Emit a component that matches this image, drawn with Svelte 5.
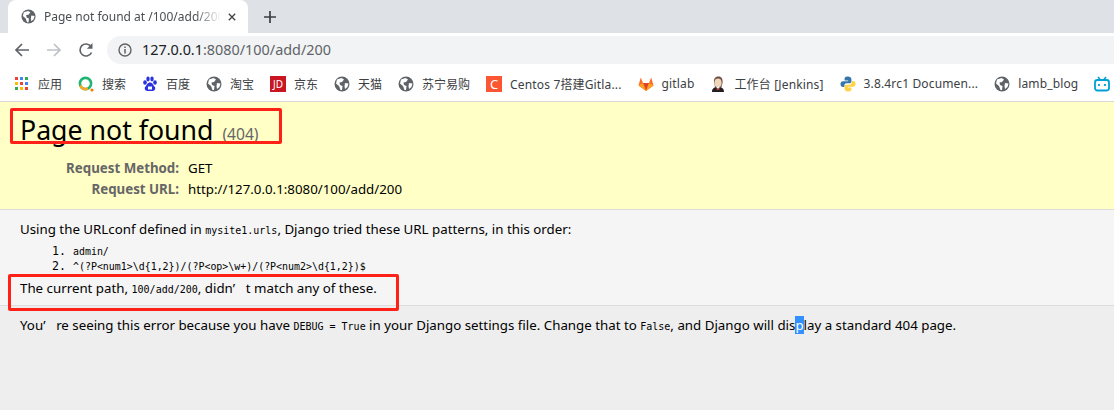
<script>
  const bookmarks = [
    { icon: 'apps', label: '应用' },
    { icon: 'sou', label: '搜索' },
    { icon: 'baidu', label: '百度' },
    { icon: 'globe', label: '淘宝' },
    { icon: 'jd', label: '京东' },
    { icon: 'globe', label: '天猫' },
    { icon: 'globe', label: '苏宁易购' },
    { icon: 'csdn', label: 'Centos 7搭建Gitla...', wide: true },
    { icon: 'gitlab', label: 'gitlab', wide: true },
    { icon: 'jenkins', label: '工作台 [Jenkins]', wide: true },
    { icon: 'python', label: '3.8.4rc1 Documen...', wide: true },
    { icon: 'globe', label: 'lamb_blog', wide: true },
    { icon: 'bili', label: '' }
  ];
  const appColors = ['#ea4335', '#4285f4', '#34a853', '#fbbc05', '#ea4335', '#4285f4', '#34a853', '#fbbc05', '#ea4335'];
</script>

{#snippet globe()}
  <svg class="ico" viewBox="0 0 16 16">
    <circle cx="8" cy="8" r="7.5" fill="#5f6368" />
    <path d="M3 3.5 L7.5 2 L10 3.5 L8 6 L5.5 6.5 L6 9 L8.5 10 L8 14 L6.5 14 L5 10 L2 7.5 Z M11 7 L14.5 7.5 L13.5 11 L11 13 L10.5 10 Z" fill="#fff" />
  </svg>
{/snippet}

<div class="browser">
  <div class="tabstrip">
    <div class="tab">
      {@render globe()}
      <span class="tab-title">Page not found at /100/add/200</span>
      <svg class="close" viewBox="0 0 10 10"><path d="M1 1 L9 9 M9 1 L1 9" stroke="#3c4043" stroke-width="1.6" /></svg>
    </div>
    <svg class="newtab" viewBox="0 0 12 12"><path d="M6 0 V12 M0 6 H12" stroke="#3c4043" stroke-width="1.7" /></svg>
  </div>

  <div class="toolbar">
    <svg class="nav" viewBox="0 0 16 16"><path d="M15 8 H2 M8 2 L2 8 L8 14" fill="none" stroke="#5f6368" stroke-width="1.7" /></svg>
    <svg class="nav" viewBox="0 0 16 16"><path d="M1 8 H14 M8 2 L14 8 L8 14" fill="none" stroke="#bdc1c6" stroke-width="1.7" /></svg>
    <svg class="nav" viewBox="0 0 16 16"><path d="M13.5 10.5 A6 6 0 1 1 13 4.6" fill="none" stroke="#5f6368" stroke-width="1.7" /><path d="M14.5 1 V6.8 H8.8 Z" fill="#5f6368" /></svg>
    <div class="omnibox">
      <svg class="info" viewBox="0 0 14 14"><circle cx="7" cy="7" r="6" fill="none" stroke="#5f6368" stroke-width="1.4" /><path d="M7 6 V10.5 M7 3.4 V5" stroke="#5f6368" stroke-width="1.5" /></svg>
      <span class="url"><b>127.0.0.1</b>:8080/100/add/200</span>
    </div>
  </div>

  <div class="bookmarks">
    {#each bookmarks as b}
      <div class="bm">
        {#if b.icon === 'apps'}
          <div class="apps">
            {#each appColors as c}<i style="background: {c}"></i>{/each}
          </div>
        {:else if b.icon === 'sou'}
          <svg class="ico" viewBox="0 0 16 16"><circle cx="7.5" cy="7.5" r="5.6" fill="none" stroke="#21b573" stroke-width="2.6" /><path d="M2.2 9.5 A5.6 5.6 0 0 0 10 12.5" fill="none" stroke="#f9a825" stroke-width="2.6" /><circle cx="14" cy="14" r="1.6" fill="#f57c00" /></svg>
        {:else if b.icon === 'baidu'}
          <svg class="ico" viewBox="0 0 16 16" fill="#2932e1"><ellipse cx="3" cy="6.5" rx="1.8" ry="2.3" /><ellipse cx="6" cy="3" rx="1.7" ry="2.4" /><ellipse cx="10" cy="3" rx="1.7" ry="2.4" /><ellipse cx="13" cy="6.5" rx="1.8" ry="2.3" /><path d="M8 6.5 C5.5 6.5 5 9 3.5 10.5 C2 12 2.8 15 5.5 15 H10.5 C13.2 15 14 12 12.5 10.5 C11 9 10.5 6.5 8 6.5 Z" /><rect x="6" y="10.5" width="4" height="3" fill="#fff" /></svg>
        {:else if b.icon === 'globe'}
          {@render globe()}
        {:else if b.icon === 'jd'}
          <span class="jd">JD</span>
        {:else if b.icon === 'csdn'}
          <span class="csdn">C</span>
        {:else if b.icon === 'gitlab'}
          <svg class="ico" viewBox="0 0 16 16"><path d="M8 15 L0.5 9.5 L2.8 1.5 L5 7 H11 L13.2 1.5 L15.5 9.5 Z" fill="#fc6d26" /><path d="M8 15 L5 7 H11 Z" fill="#e24329" /><path d="M0.5 9.5 L5 7 L8 15 Z M15.5 9.5 L11 7 L8 15 Z" fill="#fca326" /></svg>
        {:else if b.icon === 'jenkins'}
          <svg class="ico" viewBox="0 0 16 16"><path d="M4 6 C3.5 2 6 .5 8.5 .5 C11.5 .5 13 3 12.5 7 L11.5 11 H5 Z" fill="#6d4c41" /><ellipse cx="8" cy="7" rx="3.6" ry="4.4" fill="#f0d6b9" /><path d="M2 16 C2 12.5 4 11.5 6 11 L8 13 L10 11 C12 11.5 14 12.5 14 16 Z" fill="#231f20" /><path d="M6.5 12 L8 13.5 L9.5 12 V14 H6.5 Z" fill="#d33833" /></svg>
        {:else if b.icon === 'python'}
          <svg class="ico" viewBox="0 0 16 16"><path d="M8 .5 C5 .5 4.6 1.7 4.6 3 V4.6 H8.2 V5.2 H3 C1.4 5.2 .5 6.4 .5 8 C.5 9.8 1.4 11 3 11 H4.4 V9.2 C4.4 8 5.4 7.2 6.5 7.2 H9.8 C10.8 7.2 11.4 6.4 11.4 5.5 V3 C11.4 1.4 10 .5 8 .5 Z" fill="#3776ab" /><path d="M8 15.5 C11 15.5 11.4 14.3 11.4 13 V11.4 H7.8 V10.8 H13 C14.6 10.8 15.5 9.6 15.5 8 C15.5 6.2 14.6 5 13 5 H11.6 V6.8 C11.6 8 10.6 8.8 9.5 8.8 H6.2 C5.2 8.8 4.6 9.6 4.6 10.5 V13 C4.6 14.6 6 15.5 8 15.5 Z" fill="#ffd343" /></svg>
        {:else if b.icon === 'bili'}
          <svg class="ico" viewBox="0 0 16 16"><rect x="1" y="4" width="14" height="10.5" rx="2.4" fill="none" stroke="#00a1d6" stroke-width="1.8" /><path d="M4 1 L6.5 4 M12 1 L9.5 4" stroke="#00a1d6" stroke-width="1.6" /><path d="M5 8 V10 M11 8 V10" stroke="#00a1d6" stroke-width="1.8" /></svg>
        {/if}
        {#if b.label}<span class="bm-label" class:wide={b.wide}>{b.label}</span>{/if}
      </div>
    {/each}
  </div>
</div>

<main class="page">
  <section class="summary">
    <h1>Page not found <span>(404)</span></h1>
    <table>
      <tbody>
        <tr><th>Request Method:</th><td>GET</td></tr>
        <tr><th>Request URL:</th><td>http://127.0.0.1:8080/100/add/200</td></tr>
      </tbody>
    </table>
  </section>

  <section class="info-block">
    <p>Using the URLconf defined in <code>mysite1.urls</code>, Django tried these URL patterns, in this order:</p>
    <ol>
      <li><code>admin/</code></li>
      <li><code>^(?P&lt;num1&gt;\d{'{'}1,2{'}'})/(?P&lt;op&gt;\w+)/(?P&lt;num2&gt;\d{'{'}1,2{'}'})$</code></li>
    </ol>
    <p>The current path, <code>100/add/200</code>, didn<span class="quote">’</span>t match any of these.</p>
  </section>

  <section class="explanation">
    <p>You<span class="quote">’</span>re seeing this error because you have <code>DEBUG = True</code> in your Django settings file. Change that to <code>False</code>, and Django will dis<span class="sel">p</span>lay a standard 404 page.</p>
  </section>

  <div class="mark mark-title"></div>
  <div class="mark mark-path"></div>
</main>

<style>
  :global(body) {
    margin: 0;
    background: #eeeeee;
    font-family: "Noto Sans", "Noto Sans CJK SC", sans-serif;
    overflow: hidden;
  }

  .browser {
    height: 102px;
    background: #fff;
    border-bottom: 1px solid #d9d9d9;
    box-sizing: border-box;
    color: #3c4043;
  }

  .tabstrip {
    display: flex;
    align-items: center;
    height: 33px;
    padding-left: 8px;
    background: #dee1e6;
  }

  .tab {
    display: flex;
    align-items: center;
    box-sizing: border-box;
    width: 240px;
    height: 33px;
    padding: 0 12px 0 13px;
    background: #fff;
    border-radius: 8px 8px 0 0;
  }

  .ico {
    width: 16px;
    height: 16px;
    flex: none;
  }

  .tab .ico {
    width: 15px;
    height: 15px;
  }

  .tab-title {
    flex: 1;
    margin-left: 8px;
    overflow: hidden;
    white-space: nowrap;
    font-size: 12px;
    color: #4a4d51;
    -webkit-mask-image: linear-gradient(to right, #000 85%, transparent);
    mask-image: linear-gradient(to right, #000 85%, transparent);
  }

  .close {
    width: 8px;
    height: 8px;
    margin-left: 7px;
  }

  .newtab {
    width: 12px;
    height: 12px;
    margin-left: 16px;
  }

  .toolbar {
    display: flex;
    align-items: center;
    height: 33px;
    padding-left: 14px;
    gap: 16px;
  }

  .nav {
    width: 16px;
    height: 16px;
  }

  .omnibox {
    display: flex;
    align-items: center;
    flex: 1;
    height: 28px;
    margin-left: -3px;
    padding-left: 11px;
    background: #f1f3f4;
    border-radius: 14px 0 0 14px;
  }

  .info {
    width: 14px;
    height: 14px;
  }

  .url {
    margin-left: 10px;
    font-size: 14.4px;
    color: #5f6368;
  }

  .url b {
    font-weight: 400;
    color: #202124;
  }

  .bookmarks {
    display: flex;
    align-items: center;
    height: 35px;
    padding-left: 14px;
    gap: 16px;
    white-space: nowrap;
  }

  .bm {
    display: flex;
    align-items: center;
    gap: 8px;
    font-size: 12px;
    color: #3c4043;
  }

  .bm-label.wide {
    letter-spacing: 0.15px;
  }

  .apps {
    display: grid;
    grid-template-columns: repeat(3, 3px);
    gap: 2px;
    width: 15px;
    padding-left: 1px;
  }

  .apps i {
    width: 3px;
    height: 3px;
  }

  .jd, .csdn {
    display: flex;
    align-items: center;
    justify-content: center;
    width: 16px;
    height: 16px;
    color: #fff;
  }

  .jd {
    background: #c91623;
    font-size: 10px;
  }

  .csdn {
    background: #fc5531;
    font-size: 13px;
  }

  .page {
    position: relative;
    color: #000;
    font-size: 13.3px;
  }

  .summary {
    height: 108px;
    box-sizing: border-box;
    padding: 10px 20px 0;
    background: #ffffc6;
    border-bottom: 1px solid #ddd;
  }

  h1 {
    margin: 0 0 6px;
    font-size: 26.7px;
    font-weight: 400;
    line-height: 36px;
  }

  h1 span {
    margin-left: 2px;
    font-size: 15.6px;
    color: #666;
  }

  table {
    border: none;
    border-collapse: collapse;
  }

  th {
    width: 159px;
    padding: 0 9px 0 0;
    text-align: right;
    font-weight: 700;
    font-size: 13.3px;
    color: #666;
    line-height: 21px;
  }

  td {
    padding: 0;
    line-height: 21px;
    font-size: 13.3px;
  }

  .info-block {
    height: 96px;
    box-sizing: border-box;
    padding: 9px 20px 0;
    background: #f5f5f5;
    border-bottom: 1px solid #ddd;
  }

  p {
    margin: 0;
    line-height: 20px;
    white-space: nowrap;
  }

  ol {
    margin: 3px 0 4px;
    padding-left: 53px;
    font-family: "DejaVu Sans Mono", "Liberation Mono", monospace;
    font-size: 11.6px;
    line-height: 14px;
  }

  ol code {
    font-size: 9.93px;
  }

  code {
    font-family: "DejaVu Sans Mono", "Liberation Mono", monospace;
    font-size: 10px;
  }

  .quote {
    display: inline-block;
    width: 13px;
  }

  .explanation {
    padding: 9px 20px 0;
  }

  .sel {
    background: #3390ff;
    color: #fff;
  }

  .mark {
    position: absolute;
    box-sizing: border-box;
    border: 3px solid #ff2018;
    border-radius: 2px;
  }

  .mark-title {
    left: 10px;
    top: 6px;
    width: 272px;
    height: 36px;
  }

  .mark-path {
    left: 8px;
    top: 172px;
    width: 391px;
    height: 37px;
  }
</style>
